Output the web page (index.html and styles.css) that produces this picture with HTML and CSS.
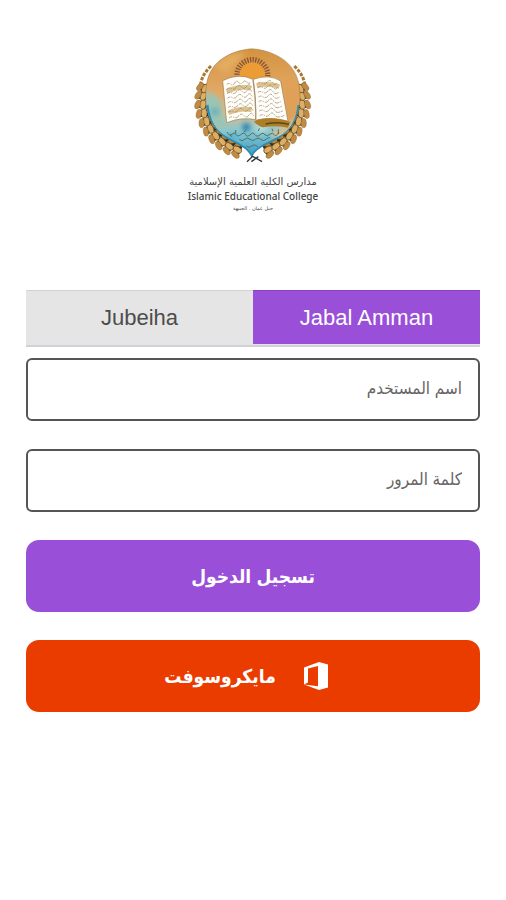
FILE: index.html
```html
<!DOCTYPE html>
<html lang="ar">
<head>
<meta charset="utf-8">
<meta name="viewport" content="width=device-width, initial-scale=1">
<title>Islamic Educational College</title>
<link rel="stylesheet" href="styles.css">
</head>
<body>
<main class="page">
  <header class="brand">
    <svg class="emblem" viewBox="0 0 420 390" aria-hidden="true">
      <defs>
        <linearGradient id="sky" x1="0" y1="0" x2="0" y2="1">
          <stop offset="0" stop-color="#d3923c"/>
          <stop offset=".4" stop-color="#e2a966"/>
          <stop offset=".6" stop-color="#d0bd92"/>
          <stop offset=".75" stop-color="#84c8d2"/>
          <stop offset="1" stop-color="#2f94c6"/>
        </linearGradient>
        <filter id="soft" x="-20%" y="-20%" width="140%" height="140%"><feGaussianBlur stdDeviation="8"/></filter>
        <clipPath id="disc"><path id="shield" d="M206 26C138 32 84 66 72 125c-14 80 8 135 56 168 40 22 66 30 78 58 14-28 42-36 84-58 48-33 72-88 56-168C332 66 276 32 206 26Z"/></clipPath>
        <g id="grain">
          <path d="M208 318l-4 34" stroke="#29331b" stroke-width="22"/>
          <ellipse cx="204" cy="320" rx="11" ry="7" transform="rotate(-20 204 320)" fill="#b98543" stroke="#4e3818" stroke-width="2"/>
          <ellipse cx="206" cy="336" rx="14" ry="9" transform="rotate(12 206 336)" fill="#dcae66" stroke="#5c421d" stroke-width="2"/>
          <ellipse cx="205" cy="352" rx="14" ry="8" transform="rotate(24 205 352)" fill="#c08a42" stroke="#80602f" stroke-width="1"/>
        </g>
        <g id="wreath">
          <path d="M84 78C66 96 56 112 52 136" fill="none" stroke="#a8772f" stroke-width="9" stroke-dasharray="10 4"/>
          <use href="#grain" transform="rotate(17 208 188)"/>
          <use href="#grain" transform="rotate(27 208 188)"/>
          <use href="#grain" transform="rotate(37 208 188)"/>
          <use href="#grain" transform="rotate(47 208 188)"/>
          <use href="#grain" transform="rotate(57 208 188)"/>
          <use href="#grain" transform="rotate(67 208 188)"/>
          <use href="#grain" transform="rotate(77 208 188)"/>
          <use href="#grain" transform="rotate(87 208 188)"/>
          <use href="#grain" transform="rotate(97 208 188)"/>
          <use href="#grain" transform="rotate(106 208 188)"/>
        </g>
      </defs>
      <use href="#wreath"/>
      <use href="#wreath" transform="translate(418 0) scale(-1 1)"/>
      <g clip-path="url(#disc)">
        <path d="M40 20h340v340H40z" fill="url(#sky)"/>
        <g filter="url(#soft)">
          <path d="M66 150c30 20 50 20 50 50s20 50 20 70l-70-10z" fill="#9ac5b5"/>
          <path d="M300 110l60 20v100l-60 20z" fill="#dfa058"/>
          <path d="M260 280l60-30 40 0-60 60z" fill="#d3c093"/>
          <circle cx="190" cy="262" r="12" fill="#267fb4"/>
          <circle cx="150" cy="292" r="14" fill="#5ab6cf"/>
          <circle cx="96" cy="215" r="12" fill="#65aebb"/>
          <path d="M90 80l50-40 50 0-60 60z" fill="#e4ac61"/>
          <circle cx="235" cy="260" r="18" fill="#b1dbd8"/>
        </g>
        <path d="M72 195c6 50 22 80 56 98 40 22 66 30 78 58 14-28 42-36 84-58 36-20 54-50 58-98" fill="none" stroke="#1c93c4" stroke-width="9"/>
      </g>
      <use href="#shield" fill="none" stroke="#80603466" stroke-width="3"/>
      <circle cx="208" cy="105" r="46" fill="none" stroke="#8d5232" stroke-width="16" stroke-dasharray="4 4"/>
      <circle cx="208" cy="106" r="38" fill="#ed9c35"/>
      <path d="M119 122q48-25 91-4 50-17 83 5l22 121q-48-15-94-4-42-11-90 8Z" fill="#fffdf5" stroke="#9a7950" stroke-width="2"/>
      <path d="M221 240q48-13 101 6l-7 17q-40-8-75-1-13-3-27-17Z" fill="#ad7e25"/>
      <path d="M248 252q38-8 70 1" fill="none" stroke="#5f4716" stroke-width="4"/>
      <path d="M131 154q40-18 73-9M136 219q34-16 70-10M221 137q34-9 68 3" fill="none" stroke="#dfc28c" stroke-width="14"/>
      <path d="M210 118q10 62 8 121" fill="none" stroke="#a98f6b" stroke-width="4"/>
      <g fill="none" stroke="#8a857d" stroke-width="2" stroke-dasharray="10 3 4 3 15 2">
        <path d="M131 133q6-6 12 0t12-4 12-2 12 0 12-1 12 1M131 148q8-7 15-2t15-5 15 0 15-2 14 3M132 161q8-7 15-2t15-5 15 0 15-2 14 3M133 175q8-7 15-2t15-5 15 0 15-2 14 3M134 189q8-7 15-2t15-5 15 0 15-2 14 3M135 203q8-7 15-2t15-5 15 0 15-2 14 3M136 217q8-7 15-2t15-5 15 0 15-2 14 3M138 234q8-7 15-2t15-5 15 0 15-2 14 3"/>
        <path d="M223 130q8-6 15 0t15-4 15 2 15 1M224 143q8-6 15 0t15-4 15 2 15 1M225 157q8-6 15 0t15-4 15 2 19 1M226 171q8-6 15 0t15-4 15 2 20 1M227 185q8-6 15 0t15-4 15 2 22 1M228 199q8-6 15 0t15-4 15 2 24 1M229 213q8-6 15 0t15-4 15 2 26 1M230 227q8-6 15 0t15-4 15 2 29 1"/>
      </g>
      <path d="M132 276q8 14 16 6q8-6 12 2t16-2q8-8 12 2t16-2q6-8 12 2t18-2q6-6 12 2t16-2q6-6 12 2t14-8M169 298q8 8 16 0t16 0 16 0 16 0 16 0 12-4M190 318q8 8 16 0t18 2M141 285l6 5M184 276l4-7M226 273l3-8M267 266l3 8M286 268v14M158 270v10" fill="none" stroke="#5a6d5c" stroke-width="3"/>
      <path d="M192 365l17-16 28 16M226 350l-21 15" fill="none" stroke="#2c353d" stroke-width="4"/>
    </svg>
    <p class="brand-ar" dir="rtl">مدارس الكلية العلمية الإسلامية</p>
    <p class="brand-en">Islamic Educational College</p>
    <p class="brand-city" dir="rtl">جبل عمان . الجبيهة</p>
  </header>

  <form class="login" dir="rtl">
    <div class="tabs">
      <button class="tab tab-active" type="button" aria-pressed="true">Jabal Amman</button>
      <button class="tab" type="button" aria-pressed="false">Jubeiha</button>
    </div>
    <input class="field" type="text" placeholder="اسم المستخدم" aria-label="اسم المستخدم">
    <input class="field" type="password" placeholder="كلمة المرور" aria-label="كلمة المرور">
    <button class="action action-login" type="submit">تسجيل الدخول</button>
    <button class="action action-microsoft" type="button">
      <svg class="office" viewBox="0 0 24 28" aria-hidden="true"><path fill="#fff" fill-rule="evenodd" d="M0 5.5 15 0l9 2.5v23L15 28 0 22.5l14 1.8V4L4 6.5v14L0 22.5Z"/></svg>
      <span>مايكروسوفت</span>
    </button>
  </form>
</main>
</body>
</html>
```
FILE: styles.css
```css
* {
  box-sizing: border-box;
}

body {
  margin: 0;
  background: #fff;
  font-family: "Liberation Sans", "DejaVu Sans Condensed", "DejaVu Sans", sans-serif;
}

.page {
  padding: 40px 26px;
}

.brand {
  display: flex;
  flex-direction: column;
  align-items: center;
  color: #444;
}

.brand p {
  margin: 0;
  white-space: nowrap;
}

.emblem {
  width: 140px;
  height: 130px;
}

.brand .brand-ar {
  margin-top: 4px;
  font-family: "DejaVu Sans", sans-serif;
  font-size: 10px;
  line-height: 16px;
}

.brand-en {
  font-family: "Noto Sans", sans-serif;
  font-size: 10px;
  font-weight: 500;
  line-height: 12px;
}

.brand-city {
  font-family: "DejaVu Sans", sans-serif;
  font-size: 5px;
  line-height: 12px;
}

.login {
  display: flex;
  flex-direction: column;
  gap: 28px;
  margin-top: 76px;
}

.tabs {
  display: flex;
  height: 57px;
  margin-bottom: -17px;
  padding-bottom: 1px;
  border-bottom: 2px solid #d2cfd8;
  background: #e5e5e5;
}

.tab {
  flex: 1;
  padding: 0;
  border: 0;
  border-top: 1px solid #d3d3d3;
  background: #e5e5e5;
  color: #4c4c4c;
  font: 22px/52px "Liberation Sans", sans-serif;
}

.tab-active {
  border-color: #8940c5;
  background: #994fd8;
  color: #fff;
}

.field {
  width: 100%;
  height: 63px;
  padding: 0 16px 2px;
  border: 2px solid #555;
  border-radius: 6px;
  background: #fff;
  color: #444;
  font: 17px "Liberation Sans", "DejaVu Sans Condensed", "DejaVu Sans", sans-serif;
}

.field::placeholder {
  color: #666;
  opacity: 1;
}

.action {
  display: flex;
  align-items: center;
  justify-content: center;
  gap: 28px;
  height: 72px;
  padding: 0;
  border: 0;
  border-radius: 13px;
  color: #fff;
  font: bold 19px "Liberation Sans", "DejaVu Sans Condensed", "DejaVu Sans", sans-serif;
}

.action-login {
  background: #994fd8;
}

.action-microsoft {
  padding-right: 14px;
  background: #eb3c00;
}

.office {
  width: 24px;
  height: 28px;
}
```
